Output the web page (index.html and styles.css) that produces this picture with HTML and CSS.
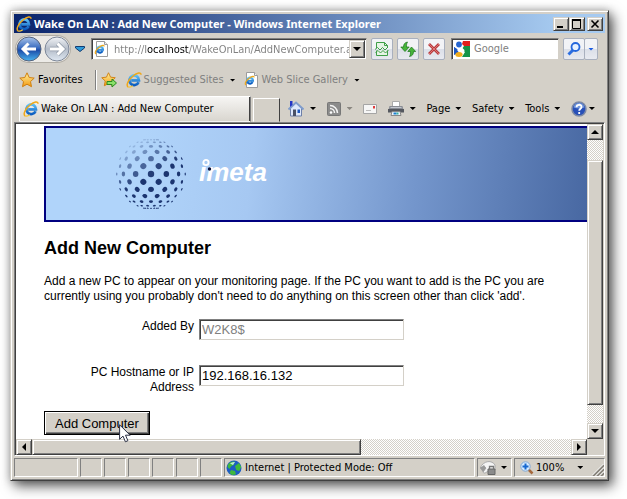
FILE: index.html
```html
<!DOCTYPE html>
<html lang="en">
<head>
<meta charset="utf-8">
<title>Wake On LAN : Add New Computer</title>
<link rel="stylesheet" href="styles.css">
</head>
<body>
<svg class="defs" aria-hidden="true">
  <defs>
    <linearGradient id="blueE" x1="0" y1="0" x2="0" y2="1"><stop offset="0" stop-color="#5cc0f8"/><stop offset="1" stop-color="#0b5cc0"/></linearGradient>
    <linearGradient id="gold" x1="0" y1="0" x2="0" y2="1"><stop offset="0" stop-color="#fff2a0"/><stop offset="1" stop-color="#f49a10"/></linearGradient>
    <linearGradient id="orbBlue" x1="0" y1="0" x2="0" y2="1"><stop offset="0" stop-color="#a9c4ea"/><stop offset=".45" stop-color="#3a6cc0"/><stop offset=".55" stop-color="#1c4ca8"/><stop offset="1" stop-color="#48b4f0"/></linearGradient>
    <linearGradient id="orbGrey" x1="0" y1="0" x2="0" y2="1"><stop offset="0" stop-color="#f2f4f7"/><stop offset=".5" stop-color="#b4bcc8"/><stop offset="1" stop-color="#dfe8f2"/></linearGradient>
    <symbol id="ie" viewBox="0 0 16 16">
      <path d="M12.6 10.2A4.8 4.8 0 1 1 13 8.4H5.2" fill="none" stroke="url(#blueE)" stroke-width="2.7"/>
      <path d="M2.2 15C-.4 13.4 2.4 7.600 7 4 11 .8 15.200-.2 15 2.800" fill="none" stroke="#f0a818" stroke-width="1.500"/>
      <path d="M2.200 15c1.300.5 3-.2 4.600-1.300" fill="none" stroke="#f6c63c" stroke-width="1.200"/>
    </symbol>
    <symbol id="pageie" viewBox="0 0 16 16">
      <path d="M2.500.5h8l3 3v12h-11z" fill="#fff" stroke="#9c9c9c"/>
      <path d="M10.500.5v3h3" fill="#eee" stroke="#9c9c9c"/>
      <path d="M8.600 10.100A3 3 0 1 1 9 8.700H4" fill="none" stroke="url(#blueE)" stroke-width="2.100"/>
      <path d="M2 13C0 11.800 2.500 8 5.500 6 8 4.200 10.200 3.600 10 5.500" fill="none" stroke="#f0a818" stroke-width="1.200"/>
    </symbol>
    <symbol id="star" viewBox="0 0 16 16">
      <path d="M8 .8l2.200 4.700 5 .6-3.700 3.500 1 5.100L8 12.200l-4.500 2.500 1-5.100L.8 6.100l5-.6z" fill="url(#gold)" stroke="#d08010" stroke-linejoin="round"/>
    </symbol>
  </defs>
</svg>

<main class="window">
  <header class="titlebar">
    <svg class="i16"><use href="#ie"/></svg>
    <h1>Wake On LAN : Add New Computer - Windows Internet Explorer</h1>
    <div class="winbuttons">
      <button class="raised wb" aria-label="Minimize"><svg viewBox="0 0 12 10"><path d="M2 8h6" stroke="#000" stroke-width="2"/></svg></button>
      <button class="raised wb" aria-label="Maximize"><svg viewBox="0 0 12 10"><path d="M1.500 1v8.500h8V1M1 1h9" fill="none" stroke="#000"/><path d="M1 1h9" stroke="#000" stroke-width="2"/></svg></button>
      <button class="raised wb close" aria-label="Close"><svg viewBox="0 0 12 10"><path d="M2.500 1.500l7 7m0-7l-7 7" stroke="#000" stroke-width="1.600"/></svg></button>
    </div>
  </header>

  <div class="navbar">
    <div class="travel">
      <button aria-label="Back"><svg viewBox="0 0 26 26"><circle cx="13" cy="13" r="12" fill="url(#orbBlue)" stroke="#56637c"/><path d="M12.500 7.500L7 13l5.500 5.500M7.500 13H20" fill="none" stroke="#fff" stroke-width="3"/></svg></button>
      <button aria-label="Forward"><svg viewBox="0 0 26 26"><circle cx="13" cy="13" r="12" fill="url(#orbGrey)" stroke="#7d8798"/><path d="M13.500 7.500L19 13l-5.500 5.500M18.500 13H6" fill="none" stroke="#8e98a6" stroke-width="4.400"/><path d="M13.500 7.500L19 13l-5.500 5.500M18.500 13H6" fill="none" stroke="#fff" stroke-width="3"/></svg></button>
    </div>
    <button class="recent" aria-label="Recent pages"><svg viewBox="0 0 10 6"><path d="M.5.5h9v1.500L5 5.500.5 2z" fill="#2e9ad8" stroke="#123c72"/></svg></button>
    <div class="sunken address">
      <svg class="i16"><use href="#pageie"/></svg>
      <input class="url" type="text" aria-label="Address" value="http://localhost/WakeOnLan/AddNewComputer.aspx">
      <button class="raised drop" aria-label="Show address list"><i class="caret big"></i></button>
    </div>
    <button class="glass" aria-label="Compatibility view"><svg class="i16" viewBox="0 0 16 16"><path d="M2.500 7V1.500h8l3 3V7M2.500 9.500v5h11v-5" fill="#e6f4e6" stroke="#3f9f48"/><path d="M10.500 1.500v3h3" fill="none" stroke="#3f9f48"/><path d="M1 8.500l2.500-2L6 9l2.500-2.500L11 9l3-3M1.500 11.500L4 9.500 6.500 12 9 9.500l2.500 2.500L14.500 9" fill="none" stroke="#3f9f48"/></svg></button>
    <button class="glass" aria-label="Refresh"><svg class="i16" viewBox="0 0 16 16"><path d="M7.500 1C4.500 1.500 3.500 3.500 3.500 6H.8l4.200 4.500L9.200 6H6.500c0-2 0-3.500 1-5z" fill="#46b43a" stroke="#18731a" stroke-width=".7"/><path d="M9.500 15.500c3-.5 4-2.500 4-5h2.200L11.500 6 7.800 10.500h2.700c0 2 0 3.500-1 5z" fill="#46b43a" stroke="#18731a" stroke-width=".7"/></svg></button>
    <button class="glass" aria-label="Stop"><svg class="i16" viewBox="0 0 16 16"><path d="M3 3l10 10M13 3L3 13" stroke="#b83a3c" stroke-width="2.800"/><path d="M3 3l10 10M13 3L3 13" stroke="#dd7475" stroke-width="1"/></svg></button>
    <div class="sunken search">
      <svg class="i16" viewBox="0 0 16 16"><path fill="#fff" d="M0 0h16v16H0z"/><path fill="#e1201c" d="M9 0h7v6h-5L8 3z"/><path fill="#159447" d="M16 5v11H8l3-5-3-3 2-3z"/><path fill="#1c57c4" d="M0 6l3 2 2 4-5 2z"/><circle cx="5" cy="3.500" r="2.900" fill="#2464d0"/><path d="M7 7l3 3M3 8l3 2" stroke="#fff" stroke-width="2"/><ellipse cx="5" cy="13.500" rx="3.600" ry="2.500" fill="#f0ac1c"/><path fill="#1c57c4" d="M0 6l4 3-4 1z"/></svg>
      <input type="text" aria-label="Search" placeholder="Google">
    </div>
    <div class="split">
      <button class="glass" aria-label="Search"><svg class="i16" viewBox="0 0 16 16"><path d="M7.500 8.500L2.500 13.500" stroke="#2c6ee0" stroke-width="3"/><circle cx="9.500" cy="6" r="4" fill="#e7f2ff" stroke="#2366dc" stroke-width="1.800"/></svg></button>
      <button class="glass narrow" aria-label="Search options"><i class="caret blue"></i></button>
    </div>
  </div>

  <nav class="favbar">
    <button class="fav"><svg class="i16"><use href="#star"/></svg>Favorites</button>
    <button class="addfav" aria-label="Add to Favorites Bar"><svg class="i16" viewBox="0 0 16 16"><use href="#star" width="15" height="15"/><path d="M6 9.500h5V7l4.500 4-4.500 4v-2.500H6z" fill="#8be06a" stroke="#288a20"/></svg></button>
    <button class="grey suggested"><svg class="i16"><use href="#ie"/></svg>Suggested Sites<i class="caret"></i></button>
    <button class="grey"><svg class="i16"><use href="#pageie"/></svg>Web Slice Gallery<i class="caret"></i></button>
  </nav>

  <div class="tabrow">
    <button class="tab"><svg class="i16"><use href="#ie"/></svg>Wake On LAN : Add New Computer</button>
    <button class="newtab" aria-label="New Tab"></button>
    <div class="commands">
      <button aria-label="Home"><svg class="i16" viewBox="0 0 16 16"><path d="M2.500 7v8h11V7L8 2z" fill="#dfe9fb" stroke="#6d7fa8"/><path d="M.5 8.500L8 1.500l7.500 7" fill="none" stroke="#7f9ccc" stroke-width="2"/><path d="M2 0h2.500v4L2 6z" fill="#2336c8"/><path d="M5 8.500h3V15H5z" fill="#4a5166"/><path d="M9.500 8.500H12V12H9.500z" fill="#1d56bc"/></svg><i class="caret"></i></button>
      <button aria-label="Feeds"><svg class="i14" viewBox="0 0 14 14"><rect x=".5" y=".5" width="13" height="13" rx="1" fill="#8b8b8b" stroke="#777"/><circle cx="4" cy="10.500" r="1.300" fill="#fff"/><path d="M3 6.500a4.500 4.500 0 0 1 4.500 4.500M3 3.500a7.500 7.500 0 0 1 7.500 7.500" fill="none" stroke="#f4f4f4" stroke-width="1.500"/></svg><i class="caret dim"></i></button>
      <button aria-label="Read mail"><svg class="i14" viewBox="0 0 14 14"><path d="M.5 2.500h13v9H.5z" fill="#f6f6f6" stroke="#a5a5a5"/><path d="M10 4h2v2.500h-2z" fill="#e03c3c"/><path d="M3 8.500h5" stroke="#bbb"/></svg></button>
      <button class="print" aria-label="Print"><svg class="i16" viewBox="0 0 16 16"><path d="M4.500.5h7V6h-7z" fill="#fff" stroke="#aaa"/><path d="M1.500 5h13L16 11H0z" fill="#8a8d94"/><path d="M0 8h16v3.500H0z" fill="#55585f"/><path d="M2.500 6.500h11" stroke="#c4c8d0"/><path d="M4 10.500h8l1 4H3z" fill="#eef4fa" stroke="#888"/><path d="M5.500 12.500h3" stroke="#1c80d0" stroke-width="2"/><path d="M8.500 12.500h2" stroke="#35b0a0" stroke-width="2"/></svg><i class="caret"></i></button>
      <button class="txt">Page<i class="caret"></i></button>
      <button class="txt">Safety<i class="caret"></i></button>
      <button class="txt">Tools<i class="caret"></i></button>
      <button class="help" aria-label="Help"><svg class="i16" viewBox="0 0 16 16"><circle cx="8" cy="8" r="7" fill="#2850b8" stroke="#7d8aa6" stroke-width="1.500"/><path d="M2.500 6.500a5.600 5.600 0 0 1 11 0q-5 2-11 0z" fill="#7196dc"/><path d="M5.500 6.200C5.500 3 10.500 3 10.500 6c0 1.800-2.300 1.800-2.300 3.800M8.200 11v2" fill="none" stroke="#fff" stroke-width="1.800"/></svg><i class="caret"></i></button>
    </div>
  </div>

  <div class="frame">
    <section class="page">
      <div class="banner">
        <svg id="globe" class="globe" viewBox="0 0 72 72" role="img" aria-label="Globe of dots"></svg>
        <svg class="wordmark" viewBox="0 0 72 32"><text x="0" y="23">imeta</text><circle cx="7" cy="4.500" r="2.600" fill="#a9ccf4" stroke="#fff" stroke-width="1.900"/><circle cx="10.500" cy="11" r="1.700" fill="#0a1038"/></svg>
      </div>
      <h2>Add New Computer</h2>
      <p>Add a new PC to appear on your monitoring page. If the PC you want to add is the PC you are currently using you probably don't need to do anything on this screen other than click 'add'.</p>
      <form>
        <label for="by">Added By</label><input class="sunken" id="by" type="text" value="W2K8$" disabled>
        <label for="host">PC Hostname or IP Address</label><input class="sunken" id="host" type="text" value="192.168.16.132">
        <div class="submit">
          <button class="add" type="button"><span>Add Computer</span></button>
          <svg class="cursor" viewBox="0 0 12 19"><path d="M.6.8v14.500l3.400-3.200 2.400 5.700 2.500-1.100-2.400-5.500h4.700z" fill="#fff" stroke="#2a2f44"/></svg>
        </div>
      </form>
    </section>
    <div class="vscroll">
      <button class="raised sb" aria-label="Scroll up"><i class="caret big up"></i></button>
      <div class="vtrack"><div class="raised vthumb"></div></div>
      <button class="raised sb" aria-label="Scroll down"><i class="caret big"></i></button>
    </div>
    <div class="hscroll">
      <button class="raised sb" aria-label="Scroll left"><i class="caret left"></i></button>
      <div class="htrack"><div class="raised hthumb"></div></div>
      <button class="raised sb" aria-label="Scroll right"><i class="caret right"></i></button>
    </div>
  </div>

  <footer class="status">
    <div class="cell msg"></div><div class="cell slot"></div><div class="cell slot"></div><div class="cell slot"></div><div class="cell slot"></div><div class="cell slot"></div><div class="cell slot"></div>
    <div class="cell zone"><svg class="i16" viewBox="0 0 16 16"><circle cx="8" cy="8" r="7.500" fill="#1c5cc4"/><path d="M2 4.500C4 1 8 1 9 2L7.500 5 5 6.500 3.500 9 1.500 7zM9 6l4-3 2.200 4-2 4-3-1zM5 10l4 1 1 3.500-4 .5-2.500-2z" fill="#3fb83c"/><path d="M4 3.500a6 6 0 0 1 5-1.500L7 5z" fill="#d8f4ff" opacity=".8"/></svg>Internet | Protected Mode: Off</div>
    <div class="cell filter"><svg class="i16" viewBox="0 0 16 16"><path d="M0 8c4-8 12-8 15-3v5H9c-3 3-5 4-6 2l3-4-2-1z" fill="#f4f4f4" stroke="#aaa"/><path d="M0 8l4-3 2 3-3 4z" fill="#999"/><path d="M8 9h7v5.500H8z" fill="#8b8b8b" stroke="#666"/><path d="M9.500 9V6.500h4V9" fill="none" stroke="#777" stroke-width="1.300"/></svg><i class="caret"></i></div>
    <div class="cell zoom"><svg class="i14" viewBox="0 0 14 14"><path d="M8.500 8.500l4 4" stroke="#a5683c" stroke-width="2.500"/><circle cx="5.500" cy="5.500" r="4.700" fill="#d6ebff" stroke="#82a8d4"/><path d="M5.500 2.500v6m-3-3h6" stroke="#1768d0" stroke-width="2"/></svg>100%<i class="caret"></i><svg class="grip" viewBox="0 0 12 12"><path d="M1 12L12 1M5 12l7-7M9 12l3-3" stroke="#848078" stroke-width="2"/><path d="M0 11.500L11.500 0M4 11.500L12 3.500M8 11.500l4-4" stroke="#fff"/></svg></div>
  </footer>
</main>
<script src="globe.js"></script>
</body>
</html>
```
FILE: styles.css
```css
* { box-sizing: border-box; }
body {
  margin: 0;
  padding: 10px 18px 18px 10px;
  min-height: 100vh;
  display: flex;
  background: #fff;
  color: #000;
  font: 11px/16px "DejaVu Sans Condensed", "DejaVu Sans", sans-serif;
  overflow: hidden;
}
button, input { font: inherit; color: inherit; margin: 0; padding: 0; border: 0; background: none; border-radius: 0; }
button { display: flex; align-items: center; white-space: nowrap; }
svg { display: block; flex: none; }
input { outline: 0; min-width: 0; }
.defs { position: absolute; width: 0; height: 0; }
.i16 { width: 16px; height: 16px; }
.i14 { width: 14px; height: 14px; }

.window {
  flex: 1;
  min-width: 0;
  display: flex;
  flex-direction: column;
  padding: 2px;
  background: #d4d0c8;
  border: 1px solid;
  border-color: #d4d0c8 #404040 #404040 #d4d0c8;
  box-shadow: inset 1px 1px #fff, inset -1px -1px #808080, 4px 5px 12px rgba(0, 0, 0, .65), 0 0 8px rgba(0, 0, 0, .2);
}
.raised {
  background: #d4d0c8;
  border: 1px solid;
  border-color: #d4d0c8 #404040 #404040 #d4d0c8;
  box-shadow: inset 1px 1px #fff, inset -1px -1px #808080;
}
.sunken {
  background: #fff;
  border: 1px solid;
  border-color: #808080 #d4d0c8 #d4d0c8 #808080;
  box-shadow: inset 1px 1px #404040;
}
.caret { flex: none; width: 6px; height: 3px; background: #000; clip-path: polygon(0 0, 100% 0, 50% 100%); }
.caret.big { width: 8px; height: 4px; }
.caret.up { clip-path: polygon(50% 0, 100% 100%, 0 100%); }
.caret.left { width: 4px; height: 8px; clip-path: polygon(0 50%, 100% 0, 100% 100%); }
.caret.right { width: 4px; height: 8px; clip-path: polygon(0 0, 100% 50%, 0 100%); }
.caret.blue { background: #1c5ce0; }
.caret.dim { background: #8a8680; }

.titlebar {
  display: flex;
  align-items: center;
  height: 19px;
  margin: 1px 1px 0;
  padding: 0 2px;
  background: linear-gradient(90deg, #0a246a, #a6caf0 92%);
}
.titlebar h1 { flex: 1; margin: 0 0 0 2px; color: #fff; font: bold 11px/18px "Noto Sans", sans-serif; white-space: nowrap; }
.winbuttons { display: flex; }
.wb { width: 16px; height: 14px; justify-content: center; }
.wb svg { width: 12px; height: 10px; }
.close { margin-left: 2px; }

.navbar { display: flex; align-items: center; height: 32px; padding: 0 8px 0 3px; }
.travel { display: flex; gap: 2px; border-radius: 14px; background: #eceae6; box-shadow: 0 0 0 1px #b2aea6; }
.travel svg { width: 26px; height: 26px; }
.recent { margin: 0 6px 0 5px; }
.recent svg { width: 10px; height: 6px; }
.address { flex: 1; min-width: 0; display: flex; align-items: center; height: 22px; padding: 1px 1px 1px 2px; }
.url {
  flex: 1;
  height: 18px;
  margin-left: 4px;
  background: linear-gradient(90deg, #808080 32px, #000 32px 75px, #808080 75px);
  background-clip: text;
  -webkit-background-clip: text;
  -webkit-text-fill-color: transparent;
}
.drop { width: 16px; height: 18px; justify-content: center; }
.glass {
  width: 22px;
  height: 22px;
  margin-left: 4px;
  justify-content: center;
  border: 1px solid #a9b0be;
  border-radius: 2px;
  background: linear-gradient(#f2f3f6 50%, #dbdfe8 50%, #e8eaf0);
}
.search { display: flex; align-items: center; width: 108px; height: 22px; margin-left: 6px; padding: 0 2px; }
.search input { width: 70px; margin-left: 4px; }
.search input::placeholder { color: #808080; opacity: 1; }
.split { display: flex; }
.split .narrow { width: 14px; margin-left: -1px; }

.favbar { display: flex; align-items: center; height: 30px; padding: 0 6px; }
.fav { gap: 3px; padding-right: 12px; }
.addfav { height: 20px; padding: 0 9px 0 5px; border-left: 1px solid #808080; box-shadow: inset 1px 0 #fff; }
.grey { gap: 2px; margin-right: 8px; color: #808080; }
.grey .caret, .commands .caret { margin-left: 4px; }

.tabrow { display: flex; align-items: flex-end; height: 27px; padding-left: 6px; }
.tab {
  width: 232px;
  height: 26px;
  padding-left: 3px;
  gap: 2px;
  background: linear-gradient(#f6f5f3, #d9d6cf);
  border: 1px solid;
  border-color: #fff #808080 transparent #fff;
  box-shadow: inset -1px 0 #404040;
}
.newtab { width: 27px; height: 24px; margin-left: 2px; border: 1px solid; border-color: #fff #404040 transparent #fff; }
.commands { flex: 1; display: flex; align-items: center; justify-content: space-between; height: 26px; padding: 0 11px 1px 8px; }
.commands .caret { margin-left: 6px; }
.commands .txt .caret { margin-left: 5px; }
.commands .help .caret { margin-left: 2px; }

.frame {
  flex: 1;
  display: grid;
  grid-template: 1fr 16px / minmax(0, 1fr) 16px;
  margin: 0 1px;
  border: 1px solid;
  border-color: #808080 #fff #fff #808080;
  padding: 1px 1px 0 1px;
  box-shadow: inset 1px 1px #404040;
}
.page { background: #fff; padding: 2px 0 0 28px; font: 12px/15px "Liberation Sans", Arial, sans-serif; }
.banner {
  display: flex;
  align-items: center;
  gap: 12px;
  height: 96px;
  padding-left: 69px;
  border: 2px solid #000080;
  border-right: 0;
  background: linear-gradient(96deg, #b0d4fa 18%, #a6c8f2 38%, #7496cc 68%, #4868a2);
}
.globe { width: 72px; height: 72px; }
.wordmark { width: 72px; height: 32px; }
.wordmark text { fill: #fff; font: italic bold 26px "Liberation Sans", Arial, sans-serif; }
.page h2 { margin: 15px 0 15px; font-size: 18px; line-height: 22px; }
.page p { margin: 0; max-width: 520px; }
form {
  display: grid;
  grid-template-columns: 150px 205px;
  column-gap: 5px;
  row-gap: 16px;
  align-items: start;
  margin-top: 15px;
}
form label { text-align: right; padding: 0 0 0 40px; min-height: 30px; }
form input { width: 205px; height: 21px; padding: 0 2px; font-size: 13px; }
form input:disabled { color: #808080; }
.submit { grid-column: 1 / 3; position: relative; justify-self: start; }
.add {
  height: 24px;
  padding: 0 10px;
  font-size: 13px;
  background: #d4d0c8;
  border: 1px solid #000;
  box-shadow: inset 1px 1px #fff, inset -1px -1px #404040, inset -2px -2px #808080;
}
.cursor { position: absolute; left: 75px; top: 13px; width: 12px; height: 19px; }

.vscroll { display: flex; flex-direction: column; }
.hscroll { display: flex; }
.sb { width: 16px; height: 16px; justify-content: center; }
.vtrack, .htrack { flex: 1; background: repeating-conic-gradient(#d4d0c8 0 25%, #fff 0 50%) 0 0 / 2px 2px; }
.vtrack { display: flex; flex-direction: column; padding: 20px 0 18px; }
.vthumb { flex: 1; }
.hthumb { width: 61%; height: 100%; }

.status { display: flex; gap: 2px; height: 19px; margin: 2px 1px 1px; }
.cell { display: flex; align-items: center; border: 1px solid; border-color: #808080 #fff #fff #808080; }
.msg { width: 64px; }
.slot { width: 22px; }
.zone { flex: 1; gap: 3px; padding-left: 1px; }
.filter { width: 35px; justify-content: space-between; padding: 0 4px 0 2px; }
.zoom { width: 91px; padding-left: 5px; gap: 2px; }
.zoom .caret { margin-left: 11px; }
.grip { width: 12px; height: 12px; margin: 4px 0 0 auto; }
```
FILE: globe.js
```js
// Draws the banner globe: staggered latitude rows of dots on a sphere.
const globe = document.getElementById('globe');
const R = 35, rad = Math.PI / 180, step = 13;
for (let row = -6; row <= 6; row++) {
  const lat = row * step * rad;
  for (let col = -6; col <= 6; col++) {
    if ((row + col) % 2) continue;
    const lon = col * step * rad;
    const x = R * Math.cos(lat) * Math.sin(lon);
    const y = R * Math.sin(lat);
    const depth = Math.sqrt(Math.max(0, 1 - (x * x + y * y) / (R * R)));
    const dot = document.createElementNS('http://www.w3.org/2000/svg', 'ellipse');
    const size = 3.2 * (0.35 + 0.65 * depth) * (0.6 + 0.4 * Math.cos(lat));
    dot.setAttribute('rx', Math.max(0.6, size * (0.25 + 0.75 * depth)));
    dot.setAttribute('ry', size);
    dot.setAttribute('transform', `translate(${36 + x} ${36 + y}) rotate(${Math.atan2(y, x) / rad})`);
    dot.setAttribute('fill', '#1c3570');
    dot.setAttribute('opacity', Math.min(1, Math.max(0.2, 0.95 + (x * 0.6 + y) / R * 0.7)));
    globe.append(dot);
  }
}
```
